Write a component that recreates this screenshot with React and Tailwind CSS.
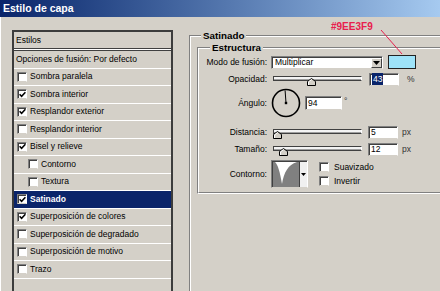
import React from 'react';

// Photoshop "Estilo de capa" dialog, Satinado page (Win2000 look).

const styles = [
  { label: 'Opciones de fusión: Por defecto', box: false },
  { label: 'Sombra paralela', box: true },
  { label: 'Sombra interior', box: true, on: true },
  { label: 'Resplandor exterior', box: true, on: true },
  { label: 'Resplandor interior', box: true },
  { label: 'Bisel y relieve', box: true, on: true },
  { label: 'Contorno', box: true, sub: true },
  { label: 'Textura', box: true, sub: true },
  { label: 'Satinado', box: true, on: true, active: true },
  { label: 'Superposición de colores', box: true, on: true },
  { label: 'Superposición de degradado', box: true },
  { label: 'Superposición de motivo', box: true },
  { label: 'Trazo', box: true },
];

function Check({ on }) {
  return (
    <div className="w-[10px] h-[10px] shrink-0 bg-white border border-t-[#808080] border-l-[#808080] border-r-white border-b-[#d4d0c8] shadow-[inset_1px_1px_0_#404040] flex items-center justify-center">
      {on && (
        <svg width="7" height="7" viewBox="0 0 7 7">
          <path d="M0.6 3.2 L2.6 5.3 L6.4 1.2" stroke="#000" strokeWidth="1.5" fill="none" />
        </svg>
      )}
    </div>
  );
}

function Arrow() {
  return (
    <svg width="7" height="4" viewBox="0 0 7 4">
      <polygon points="0,0 7,0 3.5,4" fill="#000" />
    </svg>
  );
}

function Field({ w, h, children }) {
  return (
    <div className={`${w} ${h} shrink-0 bg-white border border-t-[#808080] border-l-[#808080] border-r-white border-b-[#d4d0c8] shadow-[inset_1px_1px_0_#404040] flex items-center pl-[2px] text-black`}>
      {children}
    </div>
  );
}

function Slider({ thumb, track }) {
  return (
    <div className="relative w-[89px] h-full ml-[2px] shrink-0">
      <div className={`${track} h-[5px] border border-t-[#404040] border-l-[#404040] border-b-[#404040] border-r-white bg-[#f4f4f4] shadow-[inset_0_-1px_0_#a0a0a0]`} />
      <svg className={`absolute ${thumb}`} width="9" height="8" viewBox="0 0 9 8">
        <polygon points="0.5,7.5 0.5,3.5 4.5,0.5 8.5,3.5 8.5,7.5" fill="#d4d0c8" stroke="#000" />
        <polyline points="1.5,7 1.5,3.9 4.5,1.6" fill="none" stroke="#fff" />
      </svg>
    </div>
  );
}

function Group({ title, legendLeft, className, children }) {
  return (
    <div className={`relative border-t border-l border-[#808080] ${className}`}>
      <span className={`absolute ${legendLeft} -top-[6px] px-[2px] bg-[#d4d0c8] font-bold text-[9.8px] leading-[12px] text-black`}>
        {title}
      </span>
      {children}
    </div>
  );
}

function Row({ label, className, children }) {
  return (
    <div className={`flex items-center ${className}`}>
      <div className="w-[68px] shrink-0 text-right pr-0 mr-[4px]">{label}</div>
      {children}
    </div>
  );
}

export default function App() {
  return (
    <div className="relative w-[440px] h-[291px] overflow-hidden bg-[#d4d0c8] font-['Liberation_Sans',Arial,sans-serif] text-black">
      <div className="h-[17px] bg-linear-to-r from-[#0a246a] to-[#a6caf0] pl-[3px] flex items-center text-white font-bold text-[10.5px]">
        Estilo de capa
      </div>

      <div className="flex h-[274px] border-l border-white">
        {/* style list */}
        <div className="mt-[13px] ml-[11px] w-[161px] shrink-0 border-l-2 border-t-2 border-r-2 border-[#3c3c3c] text-[8.5px]">
          <div className="h-[16px] flex items-center pl-[2px]">Estilos</div>
          <div className="h-[3px] border-y border-[#404040] bg-white" />
          {styles.map((s) => (
            <div
              key={s.label}
              className={`h-[17.5px] border-b border-white flex items-center gap-[3px] ${
                s.sub ? 'pl-[14px]' : s.box ? 'pl-[3px]' : 'pl-[2px]'
              } ${s.active ? 'bg-[#0a246a] text-white font-bold' : ''}`}
            >
              {s.box && <Check on={s.on} />}
              <span>{s.label}</span>
            </div>
          ))}
        </div>

        {/* Satinado */}
        <Group title="Satinado" legendLeft="left-[11px]" className="ml-[16px] mt-[18px] w-[260px] shrink-0">
          <div className="border-t border-l border-white h-full pt-[10px] pl-[6px]">
            <Group
              title="Estructura"
              legendLeft="left-[12px]"
              className="border-b border-b-white"
            >
              <div className="border-t border-l border-b border-t-white border-l-white border-b-[#808080] pb-[4px] text-[8.5px]">
                <Row label="Modo de fusión:" className="mt-[5px] h-[16px]">
                  <div className="w-[112px] h-[13px] shrink-0 flex bg-white border border-t-[#808080] border-l-[#808080] border-r-white border-b-[#d4d0c8] shadow-[inset_1px_1px_0_#404040]">
                    <div className="flex-1 flex items-center pl-[3px] pt-[1px]">Multiplicar</div>
                    <div className="w-[11px] mt-[1px] mb-[0px] mr-[0px] bg-[#d4d0c8] border border-t-white border-l-white border-b-[#404040] border-r-[#404040] flex items-center justify-center">
                      <Arrow />
                    </div>
                  </div>
                  <div className="ml-[5px] w-[28px] h-[14px] bg-[#9EE3F9] border border-[#222]" />
                </Row>

                <Row label="Opacidad:" className="h-[18px]">
                  <Slider track="mt-[6px]" thumb="top-[8px] left-[34px]" />
                  <div className="ml-[7px]">
                    <Field w="w-[30px]" h="h-[13px]">
                      <span className="bg-[#0a246a] text-white px-[1px]">43</span>
                    </Field>
                  </div>
                  <span className="ml-[8px] text-[#333]">%</span>
                </Row>

                <Row label="Ángulo:" className="h-[30px]">
                  <svg width="30" height="30" viewBox="0 0 30 30" className="shrink-0">
                    <circle cx="15" cy="15" r="13.5" fill="none" stroke="#000" strokeWidth="1.6" />
                    <line x1="15" y1="15" x2="14.1" y2="2.5" stroke="#000" strokeWidth="1" />
                    <rect x="13.8" y="13.8" width="2.4" height="2.4" fill="#000" />
                  </svg>
                  <div className="ml-[4px]">
                    <Field w="w-[37px]" h="h-[14px]">94</Field>
                  </div>
                  <span className="self-start mt-[7px] ml-[2px] text-[#333]">°</span>
                </Row>

                <Row label="Distancia:" className="mt-[5px] h-[18px]">
                  <Slider track="mt-[6px]" thumb="top-[8px] left-[0px]" />
                  <div className="ml-[6px]">
                    <Field w="w-[30px]" h="h-[13px]">5</Field>
                  </div>
                  <span className="ml-[4px] text-[#333]">px</span>
                </Row>

                <Row label="Tamaño:" className="h-[16px]">
                  <Slider track="mt-[5px]" thumb="top-[7px] left-[6px]" />
                  <div className="ml-[6px]">
                    <Field w="w-[30px]" h="h-[13px]">12</Field>
                  </div>
                  <span className="ml-[4px] text-[#333]">px</span>
                </Row>

                <Row label="Contorno:" className="mt-[3px] h-[28px]">
                  <div className="w-[37px] h-[28px] shrink-0 flex border border-t-[#808080] border-l-[#808080] border-r-white border-b-[#d4d0c8] shadow-[inset_1px_1px_0_#404040] pt-[1px] pl-[1px]">
                    <svg width="26" height="25" viewBox="0 0 26 25" className="shrink-0">
                      <rect width="26" height="25" fill="#808080" />
                      <path d="M2 0 C5 3 7 10 9 22 C11 10 15 3 24 0 Z" fill="#fff" />
                    </svg>
                    <div className="flex-1 bg-[#f0f0f0] border-l border-[#404040] flex items-center justify-center">
                      <svg width="5" height="3" viewBox="0 0 5 3">
                        <polygon points="0,0 5,0 2.5,3" fill="#000" />
                      </svg>
                    </div>
                  </div>
                  <div className="ml-[11px] flex flex-col gap-[4px]">
                    <div className="h-[10px] flex items-center gap-[5px]">
                      <Check />
                      <span>Suavizado</span>
                    </div>
                    <div className="h-[10px] flex items-center gap-[5px]">
                      <Check />
                      <span>Invertir</span>
                    </div>
                  </div>
                </Row>
              </div>
            </Group>
          </div>
        </Group>
      </div>

      {/* colour annotation */}
      <div className="absolute left-[331px] top-[21px] text-[10px] leading-[12px] font-bold text-[#e8204e]">
        #9EE3F9
      </div>
      <svg className="absolute left-[378px] top-[28px]" width="28" height="30" viewBox="0 0 28 30">
        <line x1="3" y1="2" x2="24" y2="26" stroke="#e8204e" strokeWidth="1" />
      </svg>
    </div>
  );
}
